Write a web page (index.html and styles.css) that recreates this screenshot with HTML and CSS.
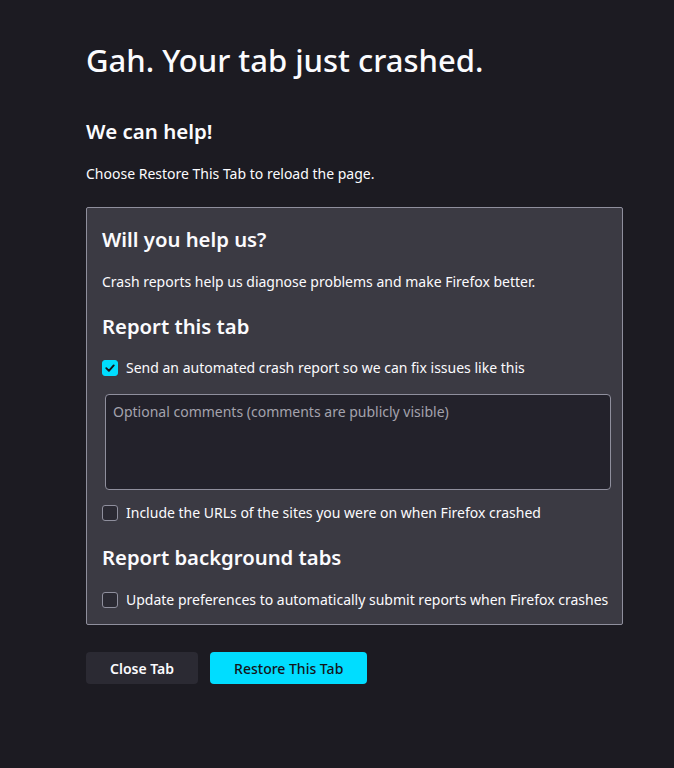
FILE: index.html
```html
<!DOCTYPE html>
<html lang="en">
<head>
<meta charset="utf-8">
<title>Tab crashed</title>
<link rel="stylesheet" href="styles.css">
</head>
<body>
<main class="page">
  <h1 class="title">Gah. Your tab just crashed.</h1>
  <h2 class="subtitle">We can help!</h2>
  <p class="lead">Choose Restore This Tab to reload the page.</p>

  <section class="report">
    <h2 class="report-title">Will you help us?</h2>
    <p class="report-text">Crash reports help us diagnose problems and make Firefox better.</p>
    <h2 class="report-title">Report this tab</h2>
    <label class="check-row check-send">
      <span class="box checked">
        <svg width="10" height="10" viewBox="0 0 10 10"><path d="M1.3 5.2 L3.9 7.8 L8.7 2.4" fill="none" stroke="#15141a" stroke-width="1.9" stroke-linecap="round" stroke-linejoin="round"/></svg>
      </span>
      <span>Send an automated crash report so we can fix issues like this</span>
    </label>
    <div class="comments">Optional comments (comments are publicly visible)</div>
    <label class="check-row check-urls">
      <span class="box"></span>
      <span>Include the URLs of the sites you were on when Firefox crashed</span>
    </label>
    <h2 class="report-title">Report background tabs</h2>
    <label class="check-row check-prefs">
      <span class="box"></span>
      <span>Update preferences to automatically submit reports when Firefox crashes</span>
    </label>
  </section>

  <div class="buttons">
    <button class="btn btn-close">Close Tab</button>
    <button class="btn btn-restore">Restore This Tab</button>
  </div>
</main>
</body>
</html>
```
FILE: styles.css
```css
html, body {
  margin: 0;
  padding: 0;
  background: #1c1b22;
  color: #fbfbfe;
  font-family: "Noto Sans", "Open Sans", sans-serif;
  font-size: 14px;
}

.page {
  width: 537px;
  padding: 36px 0 0 86px;
}

.title {
  margin: 0;
  font-size: 31px;
  font-weight: 500;
  line-height: 48px;
}

.subtitle {
  margin: 33px 0 0;
  font-size: 20.5px;
  font-weight: 600;
  line-height: 28px;
}

.lead {
  margin: 19px 0 0;
  line-height: 20px;
}

.report {
  margin-top: 23px;
  background: #3b3a43;
  border: 1px solid #8f8f9d;
  border-radius: 2px;
  padding: 15px 11px 6px 15px;
}

.report-title {
  margin: 0;
  font-size: 20.3px;
  font-weight: 600;
  line-height: 32px;
}

.report-text {
  margin: 17px 0 18px;
  line-height: 20px;
}

.check-row {
  display: flex;
  align-items: center;
  gap: 8px;
  line-height: 20px;
}

.check-send {
  margin: 16px 0 0;
}

.check-urls {
  margin: 13px 0 18px;
}

.check-prefs {
  margin: 17px 0 8px;
}

.box {
  width: 14px;
  height: 14px;
  border: 1px solid #8f8f9d;
  border-radius: 3px;
  background: #2b2a33;
  display: flex;
  align-items: center;
  justify-content: center;
  flex: none;
}

.box.checked {
  background: #00ddff;
  border-color: #00ddff;
}

.comments {
  margin: 16px 0 0 3px;
  height: 82px;
  background: #23222b;
  border: 1px solid #8f8f9d;
  border-radius: 4px;
  padding: 6px 7px;
  color: #a3a3ad;
  line-height: 22px;
}

.buttons {
  display: flex;
  gap: 12px;
  margin-top: 27px;
}

.btn {
  font-family: inherit;
  font-size: 14px;
  height: 32px;
  border: none;
  border-radius: 4px;
  padding: 0 24px;
}

.btn-close {
  background: #2b2a33;
  color: #fbfbfe;
  font-weight: 600;
}

.btn-restore {
  background: #00ddff;
  color: #15141a;
  font-weight: 500;
}
```
